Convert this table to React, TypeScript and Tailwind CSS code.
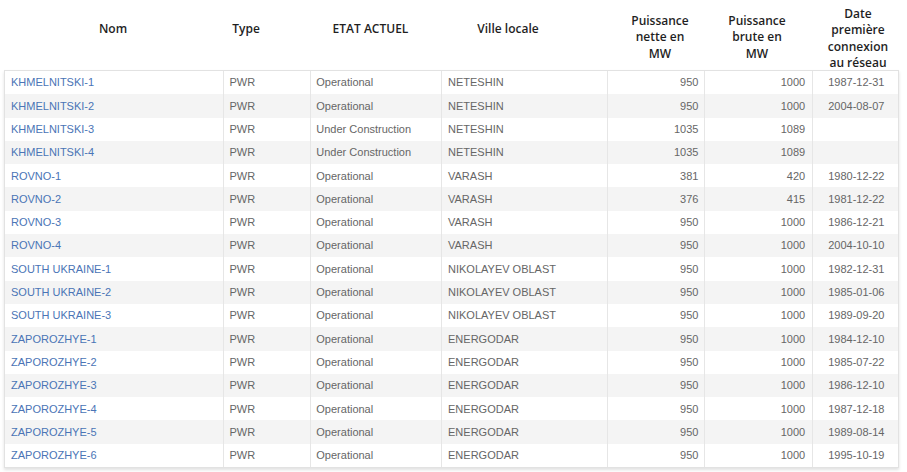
import * as React from 'react';

interface Reactor {
  readonly name: string;
  readonly state: string;
  readonly city: string;
  readonly net: string;
  readonly gross: string;
  readonly date: string;
}

const rows: Reactor[] = [
  {name: 'KHMELNITSKI-1', state: 'Operational', city: 'NETESHIN', net: '950', gross: '1000', date: '1987-12-31'},
  {name: 'KHMELNITSKI-2', state: 'Operational', city: 'NETESHIN', net: '950', gross: '1000', date: '2004-08-07'},
  {name: 'KHMELNITSKI-3', state: 'Under Construction', city: 'NETESHIN', net: '1035', gross: '1089', date: ''},
  {name: 'KHMELNITSKI-4', state: 'Under Construction', city: 'NETESHIN', net: '1035', gross: '1089', date: ''},
  {name: 'ROVNO-1', state: 'Operational', city: 'VARASH', net: '381', gross: '420', date: '1980-12-22'},
  {name: 'ROVNO-2', state: 'Operational', city: 'VARASH', net: '376', gross: '415', date: '1981-12-22'},
  {name: 'ROVNO-3', state: 'Operational', city: 'VARASH', net: '950', gross: '1000', date: '1986-12-21'},
  {name: 'ROVNO-4', state: 'Operational', city: 'VARASH', net: '950', gross: '1000', date: '2004-10-10'},
  {name: 'SOUTH UKRAINE-1', state: 'Operational', city: 'NIKOLAYEV OBLAST', net: '950', gross: '1000', date: '1982-12-31'},
  {name: 'SOUTH UKRAINE-2', state: 'Operational', city: 'NIKOLAYEV OBLAST', net: '950', gross: '1000', date: '1985-01-06'},
  {name: 'SOUTH UKRAINE-3', state: 'Operational', city: 'NIKOLAYEV OBLAST', net: '950', gross: '1000', date: '1989-09-20'},
  {name: 'ZAPOROZHYE-1', state: 'Operational', city: 'ENERGODAR', net: '950', gross: '1000', date: '1984-12-10'},
  {name: 'ZAPOROZHYE-2', state: 'Operational', city: 'ENERGODAR', net: '950', gross: '1000', date: '1985-07-22'},
  {name: 'ZAPOROZHYE-3', state: 'Operational', city: 'ENERGODAR', net: '950', gross: '1000', date: '1986-12-10'},
  {name: 'ZAPOROZHYE-4', state: 'Operational', city: 'ENERGODAR', net: '950', gross: '1000', date: '1987-12-18'},
  {name: 'ZAPOROZHYE-5', state: 'Operational', city: 'ENERGODAR', net: '950', gross: '1000', date: '1989-08-14'},
  {name: 'ZAPOROZHYE-6', state: 'Operational', city: 'ENERGODAR', net: '950', gross: '1000', date: '1995-10-19'},
];

const head = `font-['Open_Sans',sans-serif] text-[12px] font-semibold leading-[16.4px] text-[#1f1f1f] text-center`;

function Header(): JSX.Element {
  return (
    <div className={`ml-[4px] flex h-[70px] w-[895px] ${head}`}>
      <div className="w-[218px] pt-[21px]">Nom</div>
      <div className="w-[88px] pt-[21px] pr-[40px]">Type</div>
      <div className="w-[131px] pt-[21px] pr-[10px]">ETAT ACTUEL</div>
      <div className="w-[166px] pt-[21px] pr-[32px]">Ville locale</div>
      <div className="w-[98px] pt-[13px] pl-[8px]">Puissance<br />nette en<br />MW</div>
      <div className="w-[108px] pt-[13px] pr-[4px]">Puissance<br />brute en<br />MW</div>
      <div className="w-[86px] pt-[6px] pl-[4px]">Date<br />première<br />connexion<br />au réseau</div>
    </div>
  );
}

function Row({r, i}: {r: Reactor; i: number}): JSX.Element {
  const cell = 'flex h-full items-center border-l border-[#e6e6e6]';
  return (
    <div
      className={`flex h-[23.3px] w-full ${i % 2 === 1 ? 'bg-[#f4f4f4]' : 'bg-white'}`}
    >
      <div className="flex h-full w-[218px] items-center pl-[6px] text-[#4a74b6]">{r.name}</div>
      <div className={`${cell} w-[88px] pl-[6px]`}>PWR</div>
      <div className={`${cell} w-[131px] pl-[5px]`}>{r.state}</div>
      <div className={`${cell} w-[166px] pl-[6px]`}>{r.city}</div>
      <div className={`${cell} w-[98px] justify-end pr-[6px]`}>{r.net}</div>
      <div className={`${cell} w-[108px] justify-end pr-[7px]`}>{r.gross}</div>
      <div className={`${cell} w-[86px] pl-[15px]`}>{r.date}</div>
    </div>
  );
}

export default function App(): JSX.Element {
  return (
    <div className="h-[472px] w-[907px] overflow-hidden bg-white">
      <Header />
      <div className="ml-[4px] w-[895px] border border-[#e2e2e2] font-['Liberation_Sans',Arial,sans-serif] text-[11px] text-[#666] shadow-[0_2px_3px_rgba(0,0,0,0.12)]">
        {rows.map((r, i) => (
          <Row key={r.name} r={r} i={i} />
        ))}
      </div>
    </div>
  );
}
